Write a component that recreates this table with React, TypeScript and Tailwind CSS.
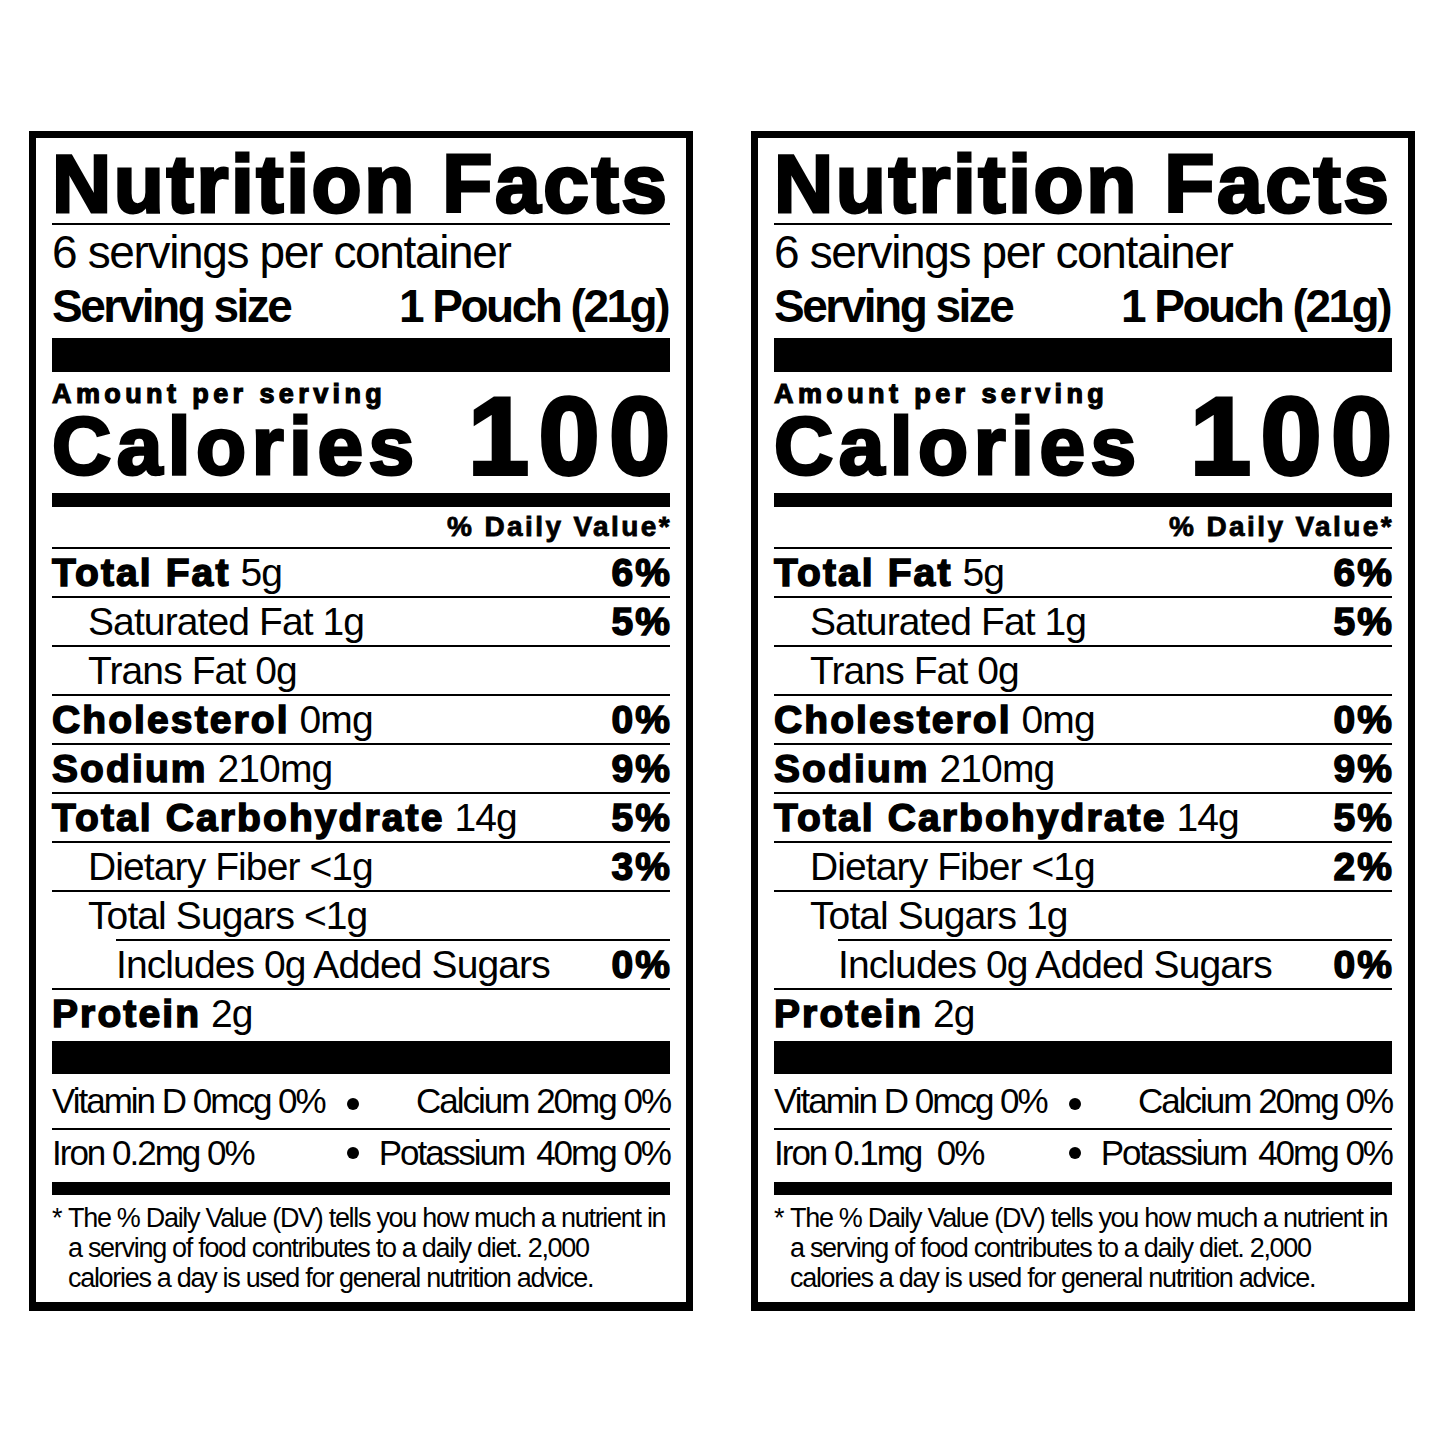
type Nutrient = {
  name?: string;
  amount: string;
  dv?: string;
  level: 0 | 1 | 2;
};

type LabelData = {
  rows: Nutrient[];
  iron: string;
};

const leftLabel: LabelData = {
  rows: [
    { name: "Total Fat", amount: "5g", dv: "6%", level: 0 },
    { amount: "Saturated Fat 1g", dv: "5%", level: 1 },
    { amount: "Trans Fat 0g", level: 1 },
    { name: "Cholesterol", amount: "0mg", dv: "0%", level: 0 },
    { name: "Sodium", amount: "210mg", dv: "9%", level: 0 },
    { name: "Total Carbohydrate", amount: "14g", dv: "5%", level: 0 },
    { amount: "Dietary Fiber <1g", dv: "3%", level: 1 },
    { amount: "Total Sugars <1g", level: 1 },
    { amount: "Includes 0g Added Sugars", dv: "0%", level: 2 },
    { name: "Protein", amount: "2g", level: 0 },
  ],
  iron: "Iron 0.2mg 0%",
};

const rightLabel: LabelData = {
  rows: [
    { name: "Total Fat", amount: "5g", dv: "6%", level: 0 },
    { amount: "Saturated Fat 1g", dv: "5%", level: 1 },
    { amount: "Trans Fat 0g", level: 1 },
    { name: "Cholesterol", amount: "0mg", dv: "0%", level: 0 },
    { name: "Sodium", amount: "210mg", dv: "9%", level: 0 },
    { name: "Total Carbohydrate", amount: "14g", dv: "5%", level: 0 },
    { amount: "Dietary Fiber <1g", dv: "2%", level: 1 },
    { amount: "Total Sugars 1g", level: 1 },
    { amount: "Includes 0g Added Sugars", dv: "0%", level: 2 },
    { name: "Protein", amount: "2g", level: 0 },
  ],
  iron: "Iron 0.1mg  0%",
};

const heavy = "font-bold tracking-[2.1px] [-webkit-text-stroke:1.5px_#000]";
const thin = "font-normal tracking-[-0.9px]";

function RowText({ row }: { row: Nutrient }) {
  return (
    <>
      <span className="whitespace-pre">
        {row.name && <span className={heavy}>{row.name}</span>}
        <span className={thin}>{row.name ? " " + row.amount : row.amount}</span>
      </span>
      {row.dv && <span className={heavy + " mr-[-2px]"}>{row.dv}</span>}
    </>
  );
}

function Label({ data }: { data: LabelData }) {
  const rows = data.rows;
  return (
    <div className="w-[664px] shrink-0 border-[7px] border-b-[9px] border-black bg-white px-[16px] pt-[6px] pb-[9px]">
      <div className="h-[81px] whitespace-nowrap border-b-2 border-black text-[82px] font-bold leading-[79px] tracking-[2.6px] [-webkit-text-stroke:3px_#000]">
        Nutrition Facts
      </div>
      <div className="text-[46px] leading-[54px] tracking-[-1.35px]">6 servings per container</div>
      <div className="flex justify-between text-[46px] font-bold leading-[54px] tracking-[-2.5px]">
        <span>Serving size</span>
        <span className="mr-[2px]">1 Pouch (21g)</span>
      </div>
      <div className="mt-[5px] h-[34px] bg-black" />

      <div className="mt-[10px] text-[27px] font-bold leading-[24px] tracking-[4.4px] [-webkit-text-stroke:1.2px_#000]">
        Amount per serving
      </div>
      <div className="flex h-[87px] items-baseline justify-between">
        <span className="text-[82px] font-bold leading-[60px] tracking-[5.5px] [-webkit-text-stroke:3px_#000]">Calories</span>
        <span className="mr-[-10px] text-[109px] font-bold leading-[60px] tracking-[10px] [-webkit-text-stroke:4px_#000]">100</span>
      </div>
      <div className="h-[14px] bg-black" />

      <div className="h-[42px] border-b-2 border-black text-right text-[28px] font-bold leading-[40px] tracking-[2.4px] [-webkit-text-stroke:0.8px_#000]">
        <span className="mr-[-2px]">% Daily Value*</span>
      </div>

      <div className="text-[39px]">
        {rows.map((row, i) => {
          if (row.level === 2) {
            return (
              <div key={i} className="h-[51px] border-b-2 border-black">
                <div className="ml-[64px] flex h-[49px] items-baseline justify-between border-t-2 border-black leading-[47px]">
                  <RowText row={row} />
                </div>
              </div>
            );
          }
          const next = rows[i + 1];
          const noLine = i === rows.length - 1 || (next && next.level === 2);
          return (
            <div
              key={i}
              className={
                noLine
                  ? "flex h-[47px] items-baseline justify-between leading-[47px]"
                  : "flex h-[49px] items-baseline justify-between border-b-2 border-black leading-[47px]"
              }
            >
              <div className={row.level === 1 ? "flex w-full justify-between pl-[36px]" : "flex w-full justify-between"}>
                <RowText row={row} />
              </div>
            </div>
          );
        })}
      </div>

      <div className="mt-[4px] h-[33px] bg-black" />

      <div className="text-[35px] tracking-[-2px]">
        <div className="grid h-[56px] grid-cols-[294px_14px_1fr] items-center border-b-2 border-black leading-[54px]">
          <span className="whitespace-pre">Vitamin D 0mcg 0%</span>
          <span className="mt-[6px] h-[12px] w-[12px] justify-self-center rounded-full bg-black" />
          <span className="justify-self-end whitespace-pre">Calcium 20mg 0%</span>
        </div>
        <div className="grid h-[46px] grid-cols-[294px_14px_1fr] items-center leading-[46px]">
          <span className="whitespace-pre">{data.iron}</span>
          <span className="h-[12px] w-[12px] justify-self-center rounded-full bg-black" />
          <span className="justify-self-end whitespace-pre">
            Potassium<span className="ml-[12px]">40mg 0%</span>
          </span>
        </div>
      </div>

      <div className="mt-[6px] h-[13px] bg-black" />

      <div className="mt-[8px] flex text-[27px] leading-[30px] tracking-[-1.3px]">
        <span className="w-[16px] shrink-0">*</span>
        <div>
          <div className="whitespace-nowrap">The % Daily Value (DV) tells you how much a nutrient in</div>
          <div className="whitespace-nowrap">a serving of food contributes to a daily diet. 2,000</div>
          <div className="whitespace-nowrap">calories a day is used for general nutrition advice.</div>
        </div>
      </div>
    </div>
  );
}

export default function App() {
  return (
    <div className="flex min-h-[1445px] w-[1445px] items-start gap-[58px] bg-white pl-[29px] pt-[131px] font-['Liberation_Sans',Arial,sans-serif] text-black">
      <Label data={leftLabel} />
      <Label data={rightLabel} />
    </div>
  );
}
